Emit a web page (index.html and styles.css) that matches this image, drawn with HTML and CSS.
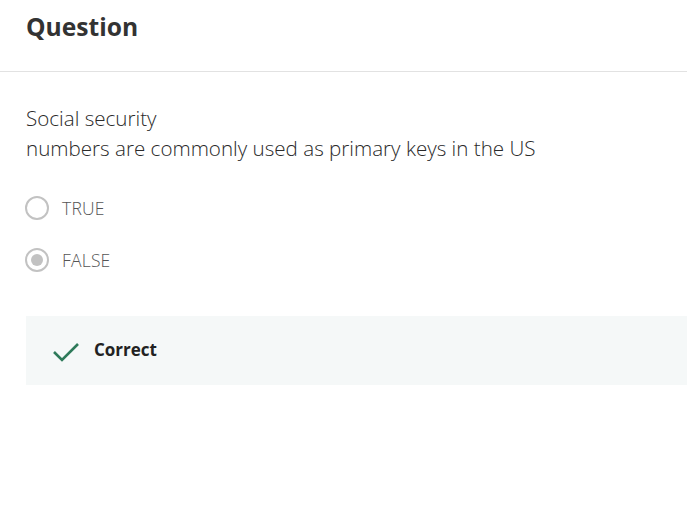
FILE: index.html
```html
<!DOCTYPE html>
<html>
<head>
<meta charset="utf-8">
<link rel="stylesheet" href="styles.css">
</head>
<body>
<header class="header">
  <h1 class="title">Question</h1>
</header>
<main class="content">
  <p class="question">Social security<br>numbers are commonly used as primary keys in the US</p>
  <ul class="options">
    <li class="option"><span class="radio"></span><span class="label">TRUE</span></li>
    <li class="option"><span class="radio checked"></span><span class="label">FALSE</span></li>
  </ul>
  <div class="feedback">
    <svg class="check" width="28" height="22" viewBox="0 0 28 22"><path d="M2 11 L10 19 L26 3" fill="none" stroke="#2e7a5a" stroke-width="2.6"/></svg>
    <span class="feedback-text">Correct</span>
  </div>
</main>
</body>
</html>
```

FILE: styles.css
```css
html, body { margin: 0; padding: 0; background: #fff; }
body { font-family: "Open Sans", sans-serif; color: #333; }
.header {
  height: 72px;
  border-bottom: 1px solid #e2e2e2;
  box-sizing: border-box;
  padding: 0 26px;
  display: flex;
  align-items: flex-start;
}
.title {
  margin: 10px 0 0;
  font-size: 24.6px;
  line-height: 34px;
  font-weight: 700;
  color: #333;
}
.content { padding: 0 0 0 26px; }
.question {
  margin: 0;
  padding-top: 31px;
  font-size: 20.6px;
  line-height: 30px;
  font-weight: 300;
  color: #2a2a2a;
}
.options { list-style: none; margin: 33px 0 0; padding: 0; display: flex; flex-direction: column; gap: 28px; }
.option { display: flex; align-items: center; gap: 13px; height: 24px; }
.radio {
  width: 24px; height: 24px; box-sizing: border-box;
  border: 2px solid #c2c2c2; border-radius: 50%;
  display: flex; align-items: center; justify-content: center;
  margin-left: -1px;
}
.radio.checked::after { content: ""; width: 12px; height: 12px; border-radius: 50%; background: #c2c2c2; }
.label { font-size: 17.5px; font-weight: 300; color: #555; letter-spacing: 0.2px; }
.feedback {
  margin-top: 44px;
  height: 69px;
  background: #f5f8f8;
  display: flex; align-items: center;
  padding-left: 26px;
}
.check { margin-right: 14px; margin-top: 2px; }
.feedback-text { font-size: 17px; font-weight: 700; color: #222; margin-top: -3px; }
```
